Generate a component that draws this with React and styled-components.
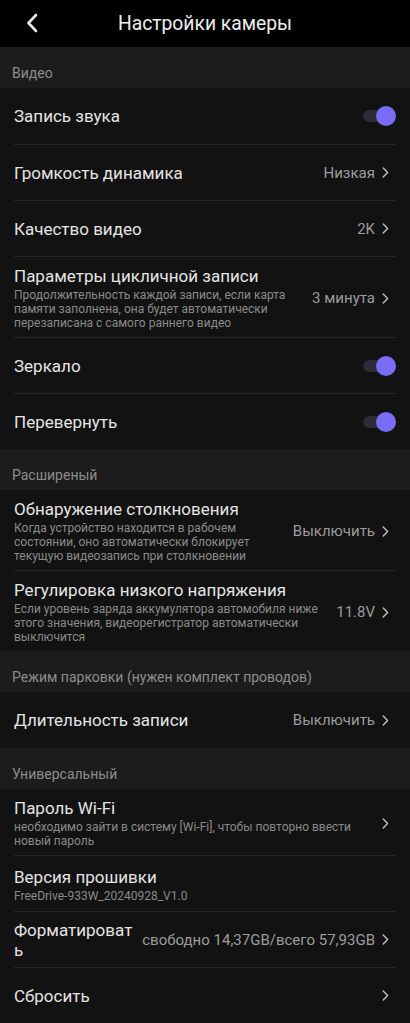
import React from 'react';
import styled, { createGlobalStyle } from 'styled-components';

const GlobalStyle = createGlobalStyle`
  html, body {
    margin: 0;
    padding: 0;
    background: #121212;
  }
  body {
    font-family: Roboto, 'Noto Sans', sans-serif;
  }
`;

const sections = [
  {
    title: 'Видео',
    rows: [
      { title: 'Запись звука', toggle: true },
      { title: 'Громкость динамика', value: 'Низкая' },
      { title: 'Качество видео', value: '2K' },
      {
        title: 'Параметры цикличной записи',
        desc: 'Продолжительность каждой записи, если карта памяти заполнена, она будет автоматически перезаписана с самого раннего видео',
        value: '3 минута',
      },
      { title: 'Зеркало', toggle: true },
      { title: 'Перевернуть', toggle: true },
    ],
  },
  {
    title: 'Расширеный',
    rows: [
      {
        title: 'Обнаружение столкновения',
        desc: 'Когда устройство находится в рабочем состоянии, оно автоматически блокирует текущую видеозапись при столкновении',
        value: 'Выключить',
      },
      {
        title: 'Регулировка низкого напряжения',
        desc: 'Если уровень заряда аккумулятора автомобиля ниже этого значения, видеорегистратор автоматически выключится',
        value: '11.8V',
      },
    ],
  },
  {
    title: 'Режим парковки (нужен комплект проводов)',
    rows: [{ title: 'Длительность записи', value: 'Выключить' }],
  },
  {
    title: 'Универсальный',
    rows: [
      {
        title: 'Пароль Wi-Fi',
        desc: 'необходимо зайти в систему [Wi-Fi], чтобы повторно ввести новый пароль',
        value: '',
      },
      { title: 'Версия прошивки', desc: 'FreeDrive-933W_20240928_V1.0', noArrow: true },
      { title: 'Форматировать', value: 'свободно 14,37GB/всего 57,93GB', breakTitle: true },
      { title: 'Сбросить', value: '' },
    ],
  },
];

const Chevron = () => (
  <svg width="7" height="11" viewBox="0 0 7 11">
    <path d="M1.2 1 L5.6 5.5 L1.2 10" fill="none" stroke="#c4c4c4" strokeWidth="1.3" strokeLinecap="round" strokeLinejoin="round" />
  </svg>
);

const BackIcon = () => (
  <svg width="12" height="20" viewBox="0 0 12 20">
    <path d="M10 2 L2.5 10 L10 18" fill="none" stroke="#e8e8e8" strokeWidth="2.6" strokeLinecap="round" strokeLinejoin="round" />
  </svg>
);

const SettingRow = ({ row }) => (
  <Row $tall={!!row.desc}>
    <TextCol>
      <RowTitle $break={row.breakTitle}>{row.title}</RowTitle>
      {row.desc && <RowDesc>{row.desc}</RowDesc>}
    </TextCol>
    {row.toggle ? (
      <Toggle>
        <Track />
        <Thumb />
      </Toggle>
    ) : (
      !row.noArrow && (
        <ValueWrap>
          {row.value && <Value>{row.value}</Value>}
          <Chevron />
        </ValueWrap>
      )
    )}
  </Row>
);

const App = () => (
  <Page>
    <GlobalStyle />
    <Header>
      <BackButton>
        <BackIcon />
      </BackButton>
      <HeaderTitle>Настройки камеры</HeaderTitle>
    </Header>
    {sections.map((s) => (
      <section key={s.title}>
        <SectionTitle>{s.title}</SectionTitle>
        <List>
          {s.rows.map((r) => (
            <SettingRow key={r.title} row={r} />
          ))}
        </List>
      </section>
    ))}
  </Page>
);

// Styled Components

const Page = styled.div`
  width: 410px;
  min-height: 1023px;
  background: #121212;
  color: #e6e6e6;
  overflow: hidden;
`;

const Header = styled.header`
  position: relative;
  height: 47px;
  background: #000;
  display: flex;
  align-items: center;
  justify-content: center;
`;

const BackButton = styled.div`
  position: absolute;
  left: 26px;
  top: 13px;
  display: flex;
`;

const HeaderTitle = styled.h1`
  margin: 0;
  font-size: 19.3px;
  font-weight: 400;
  color: #ededed;
`;

const SectionTitle = styled.div`
  background: #1c1c1c;
  height: 41px;
  padding: 0 12px 7px;
  display: flex;
  align-items: flex-end;
  box-sizing: border-box;
  font-size: 14px;
  color: #8c8c8c;
`;

const List = styled.div`
  background: #121212;
`;

const Row = styled.div`
  margin: 0 14px;
  min-height: 56px;
  box-sizing: border-box;
  display: flex;
  align-items: center;
  gap: 6px;
  padding: ${(p) => (p.$tall ? '9px 0 7px' : '0')};

  & + & {
    border-top: 1px solid #262626;
  }
`;

const TextCol = styled.div`
  flex: 1 1 auto;
  min-width: 0;
  display: flex;
  flex-direction: column;
`;

const RowTitle = styled.div`
  font-size: 17px;
  line-height: 20px;
  color: #e4e4e4;
  overflow-wrap: ${(p) => (p.$break ? 'anywhere' : 'normal')};
`;

const RowDesc = styled.div`
  margin-top: 2px;
  font-size: 12px;
  line-height: 14px;
  color: #8a8a8a;
`;

const ValueWrap = styled.div`
  flex-shrink: 0;
  display: flex;
  align-items: center;
  gap: 7px;
  padding-right: 7px;
`;

const Value = styled.span`
  font-size: 15px;
  color: #9c9c9c;
  white-space: nowrap;
`;

const Toggle = styled.div`
  position: relative;
  flex-shrink: 0;
  width: 33px;
  height: 20px;
`;

const Track = styled.div`
  position: absolute;
  left: 0;
  top: 4px;
  width: 26px;
  height: 12px;
  border-radius: 6px;
  background: #2c2b36;
`;

const Thumb = styled.div`
  position: absolute;
  right: 0;
  top: 0;
  width: 20px;
  height: 20px;
  border-radius: 50%;
  background: #7b6cf5;
`;

export default App;
